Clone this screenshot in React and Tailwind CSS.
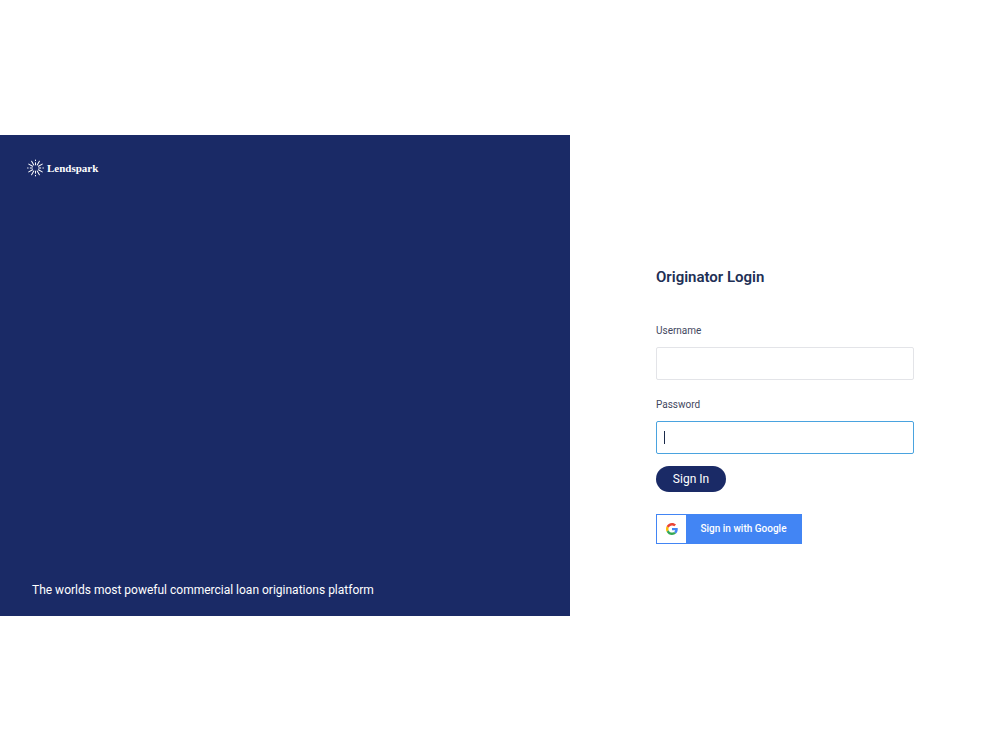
import React, { useState } from 'react'

const longRays = [30, 60, 120, 150, 210, 240, 300, 330]
const shortRays = [0, 90, 180, 270]

function Logo() {
    return (
        <div className="flex items-center gap-[3px]">
            <svg className="h-[18px] w-[17px]" viewBox="-12 -12 24 24" stroke="#fff" strokeWidth="1.4" strokeLinecap="round" aria-hidden="true">
                {longRays.map(a => <path key={a} transform={`rotate(${a})`} d="M0 -11V-4.8" />)}
                {shortRays.map(a => (
                    <g key={a} transform={`rotate(${a})`}>
                        <path d="M0 -7.4V-4.4" />
                        <path d="M0 -11.2V-10.4" />
                    </g>
                ))}
            </svg>
            <span className="font-['Liberation_Serif',serif] text-[11px] leading-5 font-bold">Lendspark</span>
        </div>
    )
}

function GoogleIcon() {
    return (
        <svg className="h-3 w-3" viewBox="0 0 48 48" aria-hidden="true">
            <path fill="#EA4335" d="M24 9.5c3.54 0 6.71 1.22 9.21 3.6l6.85-6.85C35.9 2.38 30.47 0 24 0 14.62 0 6.51 5.38 2.56 13.22l7.98 6.19C12.43 13.72 17.74 9.5 24 9.5z" />
            <path fill="#4285F4" d="M46.98 24.55c0-1.57-.15-3.09-.38-4.55H24v9.02h12.94c-.58 2.96-2.26 5.48-4.78 7.18l7.73 6c4.51-4.18 7.09-10.36 7.09-17.65z" />
            <path fill="#FBBC05" d="M10.53 28.59c-.48-1.45-.76-2.99-.76-4.59s.27-3.14.76-4.59l-7.98-6.19C.92 16.46 0 20.12 0 24s.92 7.54 2.56 10.78l7.97-6.19z" />
            <path fill="#34A853" d="M24 48c6.48 0 11.93-2.13 15.89-5.81l-7.73-6c-2.15 1.45-4.92 2.3-8.16 2.3-6.26 0-11.57-4.22-13.47-9.91l-7.98 6.19C6.51 42.62 14.62 48 24 48z" />
        </svg>
    )
}

export default function App() {
    const [username, setUsername] = useState('')
    const [password, setPassword] = useState('')

    return (
        <div className="flex min-h-screen items-center bg-white font-[Roboto,sans-serif]">
            <main className="flex w-full">
                <section className="flex w-[57%] flex-col justify-between bg-[#1a2a66] pt-[23px] pb-[17px] text-white">
                    <div className="pl-[27px]">
                        <Logo />
                    </div>
                    <p className="pl-8 text-[12px] leading-[18px]">The worlds most poweful commercial loan originations platform</p>
                </section>

                <section className="flex-1 pt-[130px] pb-[72px]">
                    <form className="mx-auto flex w-3/5 flex-col items-start" onSubmit={e => e.preventDefault()}>
                        <h1 className="mb-8 text-[15px] leading-6 font-semibold text-[#212f55]">Originator Login</h1>

                        <label htmlFor="username" className="mb-[6px] text-[10px] leading-5 text-[#3f4760]">Username</label>
                        <input
                            id="username"
                            type="text"
                            className="mb-[15px] h-[33px] w-full rounded-[2px] border border-[#e3e4e8] px-2 text-[12px] outline-none"
                            value={username}
                            onChange={e => setUsername(e.target.value)}
                        />

                        <label htmlFor="password" className="mb-[6px] text-[10px] leading-5 text-[#3f4760]">Password</label>
                        <div className="relative mb-3 w-full">
                            <input
                                id="password"
                                type="password"
                                className="block h-[33px] w-full rounded-[2px] border border-[#4aa3df] px-2 text-[12px] caret-transparent outline-none"
                                value={password}
                                onChange={e => setPassword(e.target.value)}
                            />
                            {password === '' && <span className="pointer-events-none absolute top-[10px] left-2 h-[13px] w-px bg-[#1a2a4a]" />}
                        </div>

                        <button type="submit" className="mb-[22px] h-[26px] w-[70px] rounded-full bg-[#1a2a66] text-[12px] text-white">Sign In</button>

                        <button type="button" className="flex h-[30px] w-[146px] items-stretch border border-[#4285f4] bg-[#4285f4] text-white">
                            <span className="flex w-[29px] items-center justify-center bg-white">
                                <GoogleIcon />
                            </span>
                            <span className="flex-1 self-center text-[10px] font-medium">Sign in with Google</span>
                        </button>
                    </form>
                </section>
            </main>
        </div>
    )
}
